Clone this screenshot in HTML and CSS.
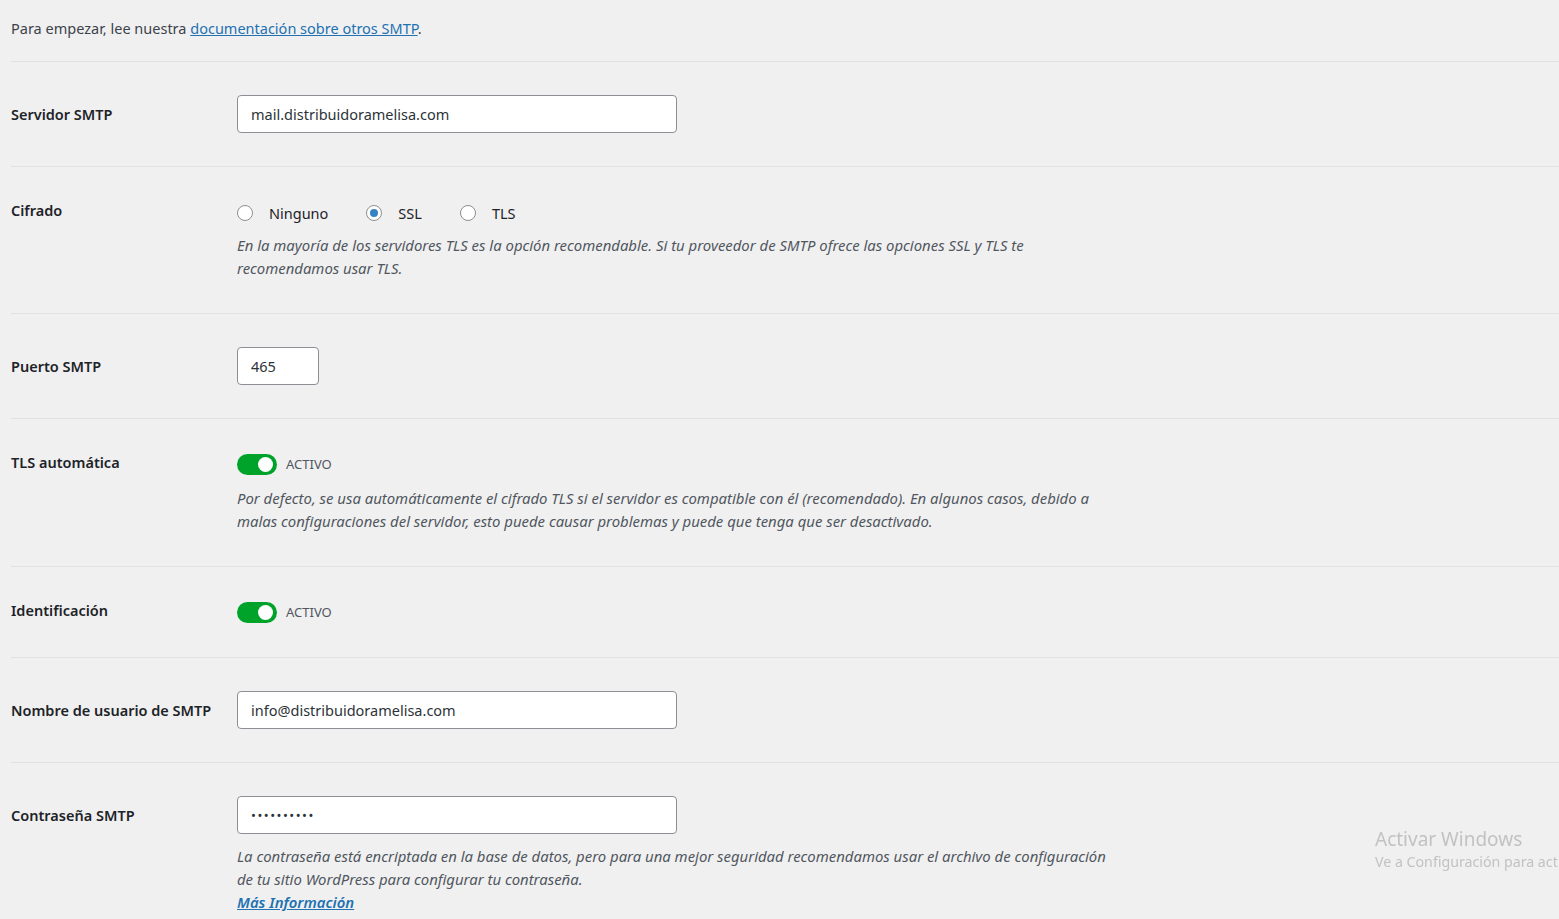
FILE: index.html
```html
<!DOCTYPE html>
<html lang="es">
<head>
  <meta charset="UTF-8">
  <title>Ajustes SMTP</title>
  <link rel="stylesheet" href="styles.css">
</head>
<body>
  <div class="settings">
    <div class="intro">
      Para empezar, lee nuestra <a href="#">documentación sobre otros SMTP</a>.
    </div>

    <div class="setting-row">
      <div class="setting-label is-input">Servidor SMTP</div>
      <div class="setting-field">
        <input type="text" class="text-input" value="mail.distribuidoramelisa.com">
      </div>
    </div>

    <div class="setting-row">
      <div class="setting-label">Cifrado</div>
      <div class="setting-field">
        <div class="radio-group">
          <label class="radio"><input type="radio" name="enc"> Ninguno</label>
          <label class="radio"><input type="radio" name="enc" checked> SSL</label>
          <label class="radio"><input type="radio" name="enc"> TLS</label>
        </div>
        <p class="desc desc-tight">
          En la mayoría de los servidores TLS es la opción recomendable. Si tu proveedor de SMTP ofrece las opciones SSL y TLS te<br>
          recomendamos usar TLS.
        </p>
      </div>
    </div>

    <div class="setting-row">
      <div class="setting-label is-input">Puerto SMTP</div>
      <div class="setting-field">
        <input type="text" class="text-input small" value="465">
      </div>
    </div>

    <div class="setting-row">
      <div class="setting-label">TLS automática</div>
      <div class="setting-field">
        <label class="toggle">
          <input type="checkbox" checked>
          <span class="toggle-track"></span>
          <span class="toggle-text">ACTIVO</span>
        </label>
        <p class="desc">
          Por defecto, se usa automáticamente el cifrado TLS si el servidor es compatible con él (recomendado). En algunos casos, debido a<br>
          malas configuraciones del servidor, esto puede causar problemas y puede que tenga que ser desactivado.
        </p>
      </div>
    </div>

    <div class="setting-row">
      <div class="setting-label">Identificación</div>
      <div class="setting-field">
        <label class="toggle">
          <input type="checkbox" checked>
          <span class="toggle-track"></span>
          <span class="toggle-text">ACTIVO</span>
        </label>
      </div>
    </div>

    <div class="setting-row">
      <div class="setting-label is-input">Nombre de usuario de SMTP</div>
      <div class="setting-field">
        <input type="text" class="text-input" value="info@distribuidoramelisa.com">
      </div>
    </div>

    <div class="setting-row">
      <div class="setting-label is-input">Contraseña SMTP</div>
      <div class="setting-field">
        <input type="password" class="text-input" value="secretpass">
        <p class="desc">
          La contraseña está encriptada en la base de datos, pero para una mejor seguridad recomendamos usar el archivo de configuración<br>
          de tu sitio WordPress para configurar tu contraseña.<br>
          <a href="#" class="more-link">Más Información</a>
        </p>
      </div>
    </div>
  </div>

  <div class="activate-windows">
    <div class="aw-title">Activar Windows</div>
    <div class="aw-sub">Ve a Configuración para act</div>
  </div>
</body>
</html>
```
FILE: styles.css
```css
html, body {
  overflow: hidden;
}

body {
  margin: 0;
  padding: 0 0 0 11px;
  background: #f0f0f1;
  font-family: "Noto Sans", "Open Sans", sans-serif;
  font-size: 14.5px;
  color: #3c434a;
}

.intro {
  padding: 18px 0 22px;
  line-height: 21px;
  border-bottom: 1px solid #e1e1e1;
}

.intro a {
  color: #2271b1;
  text-decoration: underline;
}

.setting-row {
  display: flex;
  padding: 33px 0;
  border-bottom: 1px solid #e1e1e1;
}

.setting-label {
  width: 226px;
  flex-shrink: 0;
  line-height: 20px;
  font-weight: 600;
  color: #1d2327;
}

.setting-label.is-input {
  padding-top: 9px;
}

.setting-field {
  flex-grow: 1;
}

.text-input {
  display: block;
  box-sizing: border-box;
  width: 440px;
  height: 38px;
  margin: 0;
  padding: 0 13px;
  border: 1px solid #8c8f94;
  border-radius: 4px;
  background: #fff;
  font-family: inherit;
  font-size: 14.5px;
  color: #2c3338;
  outline: none;
}

.text-input.small {
  width: 82px;
}

.text-input[type="password"] {
  letter-spacing: 1.5px;
  font-size: 13px;
}

/* radios */
.radio-group {
  display: flex;
  align-items: center;
  gap: 38px;
  height: 26px;
}

.radio {
  display: flex;
  align-items: center;
  gap: 16px;
  color: #1d2327;
  font-size: 14.5px;
  cursor: pointer;
}

.radio input {
  -webkit-appearance: none;
  appearance: none;
  width: 16px;
  height: 16px;
  margin: 0;
  border: 1px solid #8c8f94;
  border-radius: 50%;
  background: #fff;
  display: flex;
  align-items: center;
  justify-content: center;
}

.radio input:checked::before {
  content: "";
  width: 8px;
  height: 8px;
  border-radius: 50%;
  background: #3582c4;
}

/* toggle */
.toggle {
  display: flex;
  align-items: center;
  gap: 9px;
  height: 24px;
  cursor: pointer;
}

.toggle input {
  display: none;
}

.toggle-track {
  position: relative;
  width: 40px;
  height: 21px;
  border-radius: 11px;
  background: #00a32a;
}

.toggle-track::after {
  content: "";
  position: absolute;
  top: 3px;
  right: 4px;
  width: 15px;
  height: 15px;
  border-radius: 50%;
  background: #fff;
}

.toggle-text {
  font-size: 13px;
  color: #50575e;
  text-transform: uppercase;
}

/* descriptions */
.desc {
  margin: 11px 0 0;
  font-size: 14.9px;
  font-style: italic;
  line-height: 23px;
  color: #50575e;
  white-space: nowrap;
}

.desc-tight {
  margin-top: 8px;
}

.more-link {
  color: #2271b1;
  font-weight: 600;
  text-decoration: underline;
}

/* marca de agua de Windows */
.activate-windows {
  position: fixed;
  left: 1375px;
  top: 827px;
  white-space: nowrap;
  color: #c2c2c2;
  font-family: "Noto Sans", sans-serif;
  pointer-events: none;
}

.aw-title {
  font-size: 19px;
  line-height: 24px;
}

.aw-sub {
  font-size: 14.2px;
  line-height: 22px;
}
```
